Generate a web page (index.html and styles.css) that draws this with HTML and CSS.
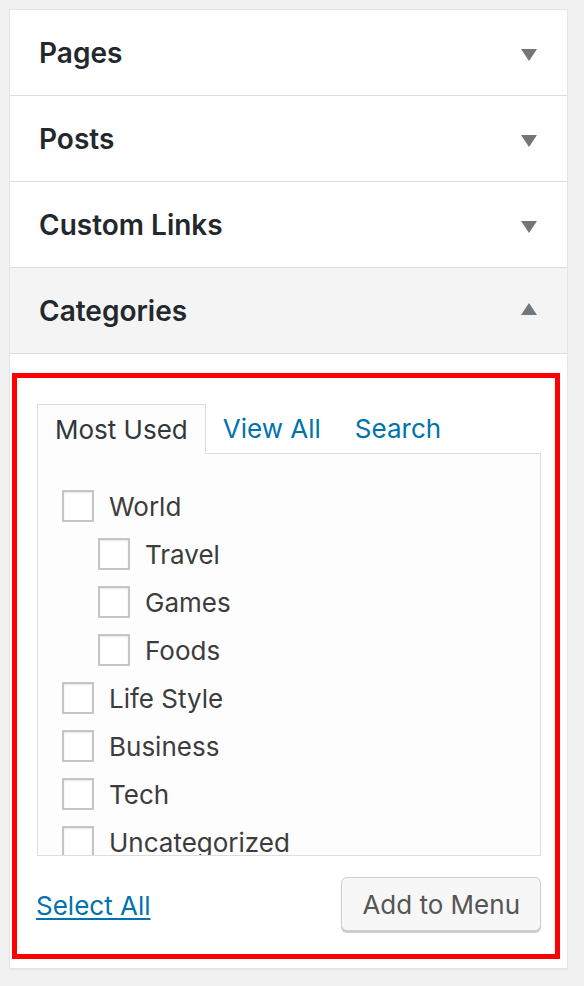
FILE: index.html
```html
<!DOCTYPE html>
<html>
<head>
    <title>Menu Items</title>
    <link rel="stylesheet" href="styles.css">
</head>
<body>
    <div class="panel">
        <div class="section">
            <h3 class="section-title">Pages <span class="arrow down"></span></h3>
        </div>
        <div class="section">
            <h3 class="section-title">Posts <span class="arrow down"></span></h3>
        </div>
        <div class="section">
            <h3 class="section-title">Custom Links <span class="arrow down"></span></h3>
        </div>
        <div class="section open">
            <h3 class="section-title">Categories <span class="arrow up"></span></h3>
            <div class="section-content">
                <div class="highlight">
                    <ul class="tabs">
                        <li class="tab active">Most Used</li>
                        <li class="tab"><a href="#">View All</a></li>
                        <li class="tab"><a href="#">Search</a></li>
                    </ul>
                    <div class="tab-panel">
                        <ul class="checklist">
                            <li><label><span class="box"></span>World</label>
                                <ul class="children">
                                    <li><label><span class="box"></span>Travel</label></li>
                                    <li><label><span class="box"></span>Games</label></li>
                                    <li><label><span class="box"></span>Foods</label></li>
                                </ul>
                            </li>
                            <li><label><span class="box"></span>Life Style</label></li>
                            <li><label><span class="box"></span>Business</label></li>
                            <li><label><span class="box"></span>Tech</label></li>
                            <li><label><span class="box"></span>Uncategorized</label></li>
                        </ul>
                    </div>
                    <div class="actions">
                        <a href="#" class="select-all">Select All</a>
                        <button type="button" class="button">Add to Menu</button>
                    </div>
                </div>
            </div>
        </div>
    </div>
</body>
</html>
```

FILE: styles.css
```css
body {
    margin: 0;
    padding: 9px 16px 16px 9px;
    background: #f1f1f1;
    font-family: Inter, "Noto Sans", sans-serif;
    color: #32373c;
}
.panel {
    background: #fff;
    border: 1px solid #e5e5e5;
    box-shadow: 0 1px 1px rgba(0, 0, 0, 0.04);
}
.section {
    border-bottom: 1px solid #ddd;
}
.section.open {
    border-bottom: none;
}
.section-title {
    margin: 0;
    height: 85px;
    padding: 0 30px 0 29px;
    display: flex;
    align-items: center;
    justify-content: space-between;
    font-size: 28px;
    font-weight: 600;
    color: #23282d;
}
.open .section-title {
    background: #f4f4f4;
    border-bottom: 1px solid #ddd;
}
.arrow {
    width: 0;
    height: 0;
    border-left: 8px solid transparent;
    border-right: 8px solid transparent;
}
.arrow.down {
    border-top: 12px solid #72777c;
    margin-top: 4px;
}
.arrow.up {
    border-bottom: 12px solid #72777c;
    margin-top: -4px;
}
.section-content {
    padding: 19px 7px 9px 2px;
}
.highlight {
    border: 5px solid #f00;
    padding: 26px 14px 21px 19px;
    font-size: 26px;
}
.tabs {
    list-style: none;
    margin: 0 0 0 1px;
    padding: 0;
    display: flex;
}
.tab {
    padding: 0 17px;
    height: 49px;
    line-height: 49px;
}
.tab a {
    color: #0073aa;
    text-decoration: none;
}
.tab.active {
    border: 1px solid #ddd;
    border-bottom: none;
    background: #fdfdfd;
    color: #32373c;
    padding: 0 17px 0 17px;
    margin-bottom: -1px;
    position: relative;
}
.tab-panel {
    margin-left: 1px;
    height: 401px;
    overflow: hidden;
    border: 1px solid #ddd;
    background: #fdfdfd;
}
.checklist {
    list-style: none;
    margin: 0;
    padding: 28px 0 0 24px;
}
.checklist ul {
    list-style: none;
    margin: 0;
    padding: 0 0 0 36px;
}
.checklist label {
    display: flex;
    align-items: center;
    height: 48px;
    color: #3c3c3c;
}
.box {
    width: 28px;
    height: 28px;
    border: 2px solid #c2c5c8;
    background: #fff;
    box-shadow: inset 0 1px 2px rgba(0, 0, 0, 0.1);
    margin-right: 15px;
}
.actions {
    display: flex;
    justify-content: space-between;
    align-items: center;
    margin-top: 21px;
}
.select-all {
    color: #0073aa;
    text-decoration: underline;
    text-underline-offset: 3px;
}
.button {
    font-family: inherit;
    font-size: 26px;
    color: #555;
    background: #f7f7f7;
    border: 1px solid #ccc;
    border-radius: 6px;
    box-shadow: 0 2px 0 #ccc;
    height: 54px;
    padding: 0 20px;
    margin-bottom: 2px;
}
```
